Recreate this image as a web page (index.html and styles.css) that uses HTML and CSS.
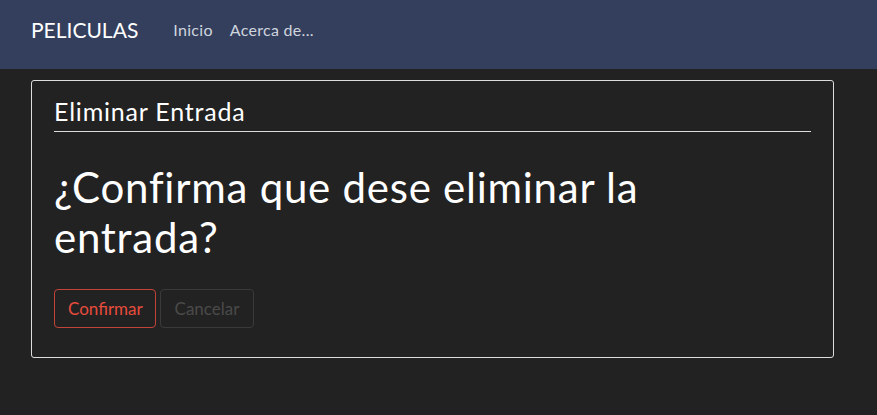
FILE: index.html
```html
<!DOCTYPE html>
<html lang="es">
<head>
<meta charset="utf-8">
<title>Eliminar Entrada</title>
<link rel="stylesheet" href="styles.css">
</head>
<body>
<nav class="navbar">
  <a class="brand" href="#">PELICULAS</a>
  <ul class="nav-links">
    <li><a href="#">Inicio</a></li>
    <li><a href="#">Acerca de...</a></li>
  </ul>
</nav>
<main class="main">
  <section class="card">
    <h4 class="card-title">Eliminar Entrada</h4>
    <h1 class="question">¿Confirma que dese eliminar la entrada?</h1>
    <div class="actions">
      <button class="btn btn-danger">Confirmar</button>
      <button class="btn btn-muted">Cancelar</button>
    </div>
  </section>
</main>
</body>
</html>
```
FILE: styles.css
```css
* { box-sizing: border-box; }
html, body { margin: 0; padding: 0; }
body {
  background: #222222;
  color: #ffffff;
  font-family: Lato, "Open Sans", "Liberation Sans", sans-serif;
  font-size: 16px;
  height: 415px;
}
.navbar {
  background: #343f5d;
  height: 69px;
  display: flex;
  align-items: center;
  padding: 0 31px 10px 31px;
}
.brand {
  color: #ffffff;
  text-decoration: none;
  font-size: 21px;
  margin-right: 35px;
}
.nav-links {
  list-style: none;
  display: flex;
  gap: 17px;
  margin: 0;
  padding: 0;
}
.nav-links a {
  color: #cfd4de;
  text-decoration: none;
  font-size: 16px;
  letter-spacing: 0.3px;
}
.main {
  padding: 11px 43px 0 31px;
}
.card {
  border: 1px solid #dddddd;
  border-radius: 3px;
  padding: 15px 22px 0 22px;
  height: 278px;
}
.card-title {
  margin: 0;
  font-weight: 400;
  font-size: 25px;
  line-height: 30px;
  letter-spacing: 0.8px;
  border-bottom: 1px solid #dddddd;
  padding-bottom: 5px;
}
.question {
  margin: 30px 0 0 0;
  font-weight: 400;
  font-size: 42px;
  line-height: 50px;
  letter-spacing: 0.75px;
  max-width: 700px;
}
.actions {
  margin-top: 27px;
  display: flex;
  gap: 4px;
}
.btn {
  background: transparent;
  font-family: inherit;
  font-size: 17px;
  height: 39px;
  padding: 0 13px;
  border-radius: 4px;
  border: 1px solid;
}
.btn-danger {
  color: #e74c3c;
  border-color: #c0443a;
  width: 102px;
}
.btn-muted {
  color: #4a4a4a;
  border-color: #3a3a3a;
  width: 94px;
}
```
